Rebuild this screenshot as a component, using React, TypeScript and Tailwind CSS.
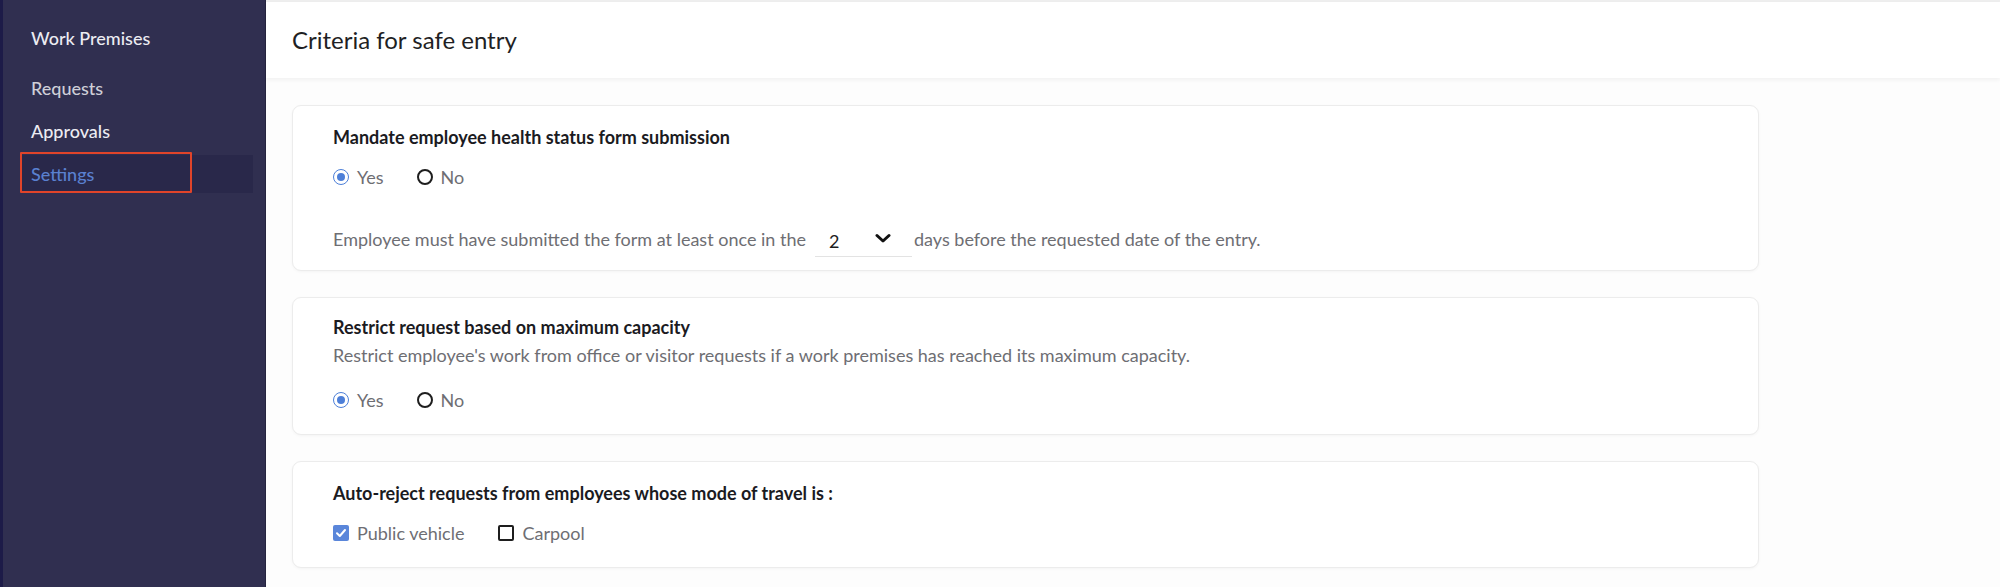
import { useState } from 'react'

const NAV = ['Work Premises', 'Requests', 'Approvals', 'Settings']

function Radio({ checked, label }: { checked: boolean; label: string }) {
  return (
    <label className="flex items-center gap-2 h-6">
      {checked ? (
        <span className="w-4 h-4 rounded-full border-[1.5px] border-[#4d7fd8] flex items-center justify-center">
          <span className="w-[8px] h-[8px] rounded-full bg-[#4d7fd8]" />
        </span>
      ) : (
        <span className="w-4 h-4 rounded-full border-2 border-[#1e1e1e]" />
      )}
      <span className="text-[18px] text-[#6e6e73]">{label}</span>
    </label>
  )
}

function Check({ checked, label }: { checked: boolean; label: string }) {
  return (
    <label className="flex items-center gap-2 h-6">
      {checked ? (
        <span className="w-4 h-4 rounded-[2px] bg-[#5a86da] flex items-center justify-center">
          <svg width="12" height="12" viewBox="0 0 12 12">
            <path d="M2 6.3 L4.8 9 L10 3" fill="none" stroke="#fff" strokeWidth="2" strokeLinecap="round" strokeLinejoin="round" />
          </svg>
        </span>
      ) : (
        <span className="w-4 h-4 rounded-[2px] border-2 border-[#1e1e1e]" />
      )}
      <span className="text-[18px] text-[#6e6e73]">{label}</span>
    </label>
  )
}

function Card({ className, children }: { className: string; children: React.ReactNode }) {
  return (
    <div className={`bg-white border border-[#ececec] rounded-[9px] shadow-[0_1px_3px_rgba(0,0,0,0.04)] px-10 ${className}`}>
      {children}
    </div>
  )
}

export default function App() {
  const [days] = useState('2')

  return (
    <div className="flex w-[2000px] h-[587px] overflow-hidden font-['Lato','Noto_Sans',sans-serif]">
      {/* Sidebar */}
      <aside className="w-[266px] shrink-0 bg-[#302f50] border-l-[3px] border-[#1d1b48] border-r border-r-[#25243f] pt-[19px] pl-[17px] pr-[12px]">
        {NAV.map((item, i) => {
          const active = item === 'Settings'
          return (
            <div
              key={item}
              className={`relative h-[38px] px-[11px] flex items-center text-[18px] font-medium ${
                i === 0 ? 'mb-[12px]' : 'mb-[5px]'
              } ${active ? 'bg-[#29284a] text-[#5a80d0]' : i === 1 ? 'text-[#cfcfd8]' : 'text-[#ececf2]'}`}
            >
              {item}
              {active && (
                <span className="absolute left-0 -top-[3px] w-[172px] h-[41px] border-2 border-[#e0442a] rounded-[1px]" />
              )}
            </div>
          )
        })}
      </aside>

      {/* Main */}
      <main className="flex-1 bg-[#fdfdfd] border-t-2 border-[#eeeeee]">
        <header className="h-[76px] bg-white pl-[26px] flex items-center shadow-[0_2px_4px_rgba(0,0,0,0.05)]">
          <h1 className="text-[24px] text-[#1f1f24]">Criteria for safe entry</h1>
        </header>

        <div className="pl-[26px] pt-[27px] flex flex-col gap-[26px] w-[1493px]">
          <Card className="pt-[17px] pb-[13px]">
            <h2 className="text-[18px] leading-[28px] font-bold text-[#1b1b1f]">
              Mandate employee health status form submission
            </h2>
            <div className="flex gap-[33px] mt-[14px]">
              <Radio checked label="Yes" />
              <Radio checked={false} label="No" />
            </div>
            <div className="flex items-center mt-[32px] text-[18px] text-[#6e6e73]">
              <span>Employee must have submitted the form at least once in the</span>
              <div className="w-[97px] h-[36px] ml-[9px] mr-[2px] border-b border-[#e3e3e3] flex items-center justify-between pl-[14px] pr-[21px]">
                <span className="text-[18px] text-[#1e1e1e] mt-[6px]">{days}</span>
                <svg width="16" height="11" viewBox="0 0 16 11">
                  <path d="M2 2.5 L8 8 L14 2.5" fill="none" stroke="#111" strokeWidth="3" strokeLinecap="round" strokeLinejoin="round" />
                </svg>
              </div>
              <span>days before the requested date of the entry.</span>
            </div>
          </Card>

          <Card className="pt-[15px] pb-[22px]">
            <h2 className="text-[18px] leading-[28px] font-bold text-[#1b1b1f]">
              Restrict request based on maximum capacity
            </h2>
            <p className="text-[18px] leading-[28px] text-[#6e6e73]">
              Restrict employee's work from office or visitor requests if a work premises has reached its maximum capacity.
            </p>
            <div className="flex gap-[33px] mt-[19px]">
              <Radio checked label="Yes" />
              <Radio checked={false} label="No" />
            </div>
          </Card>

          <Card className="pt-[17px] pb-[22px]">
            <h2 className="text-[18px] leading-[28px] font-bold text-[#1b1b1f]">
              Auto-reject requests from employees whose mode of travel is :
            </h2>
            <div className="flex gap-[34px] mt-[14px]">
              <Check checked label="Public vehicle" />
              <Check checked={false} label="Carpool" />
            </div>
          </Card>
        </div>
      </main>
    </div>
  )
}
